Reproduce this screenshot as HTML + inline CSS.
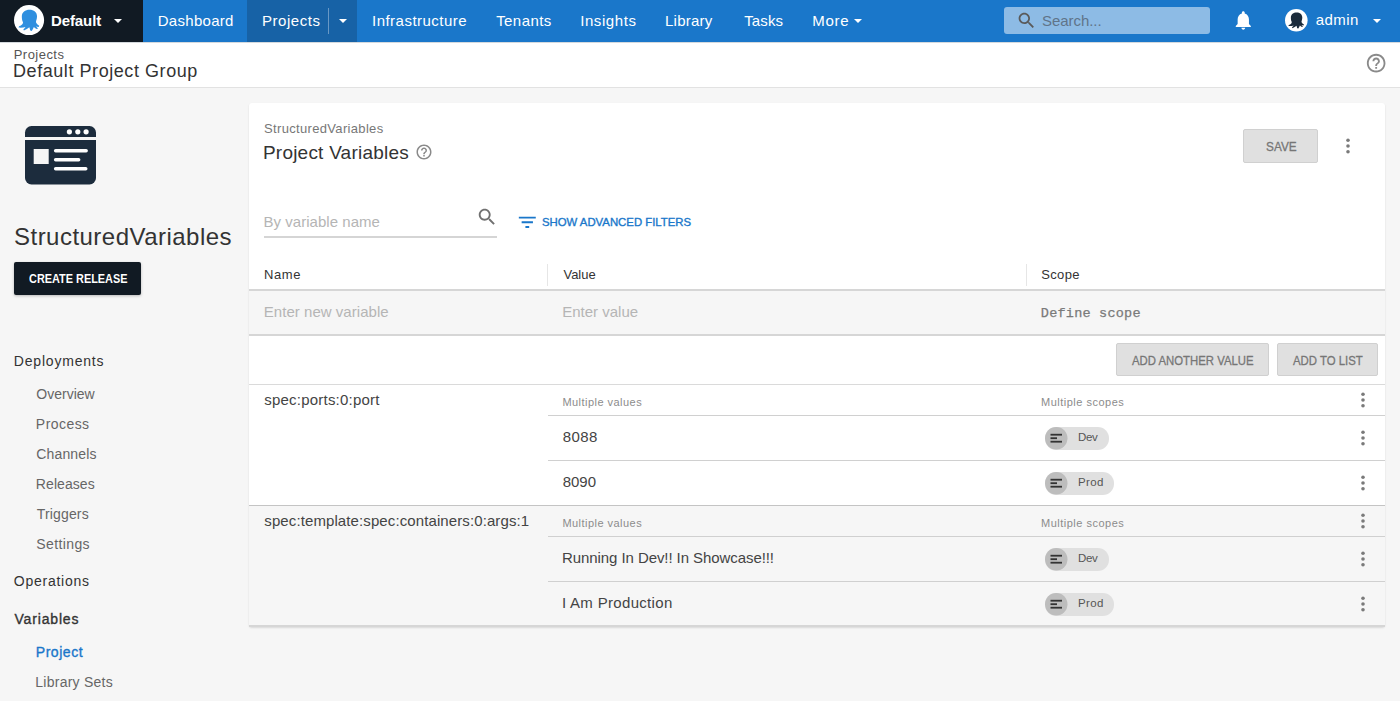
<!DOCTYPE html>
<html><head><meta charset="utf-8"><style>
*{box-sizing:border-box;margin:0;padding:0}
html,body{width:1400px;height:701px;overflow:hidden;background:#f6f6f6;font-family:"Liberation Sans",sans-serif}
.t{position:absolute;white-space:nowrap;line-height:1}
.a{position:absolute}
svg{position:absolute;overflow:visible}
</style></head><body>
<div class="a" style="left:0;top:0;width:1400px;height:42px;background:#1a77ca"></div>
<div class="a" style="left:0;top:0;width:143px;height:42px;background:#111a23"></div>
<div class="a" style="left:0;top:42px;width:1400px;height:1px;background:rgba(60,80,100,0.22);z-index:2"></div>
<div class="a" style="left:247px;top:0;width:110px;height:42px;background:#1762a6"></div>
<div class="a" style="left:328px;top:7.5px;width:1px;height:26px;background:rgba(255,255,255,0.35)"></div>
<svg style="left:13.8px;top:5.25px" width="30.1" height="30.1" viewBox="-100 -100 200 200"><circle cx="0" cy="0" r="100" fill="#fff"/><path fill="#2f8fdf" d="M-48 -25C-48 -52 -25 -69 3 -69C32 -69 53 -52 53 -25C53 -5 46 5 46 15C50 25 58 33 68 38L64 47C56 46 50 44 46 42C50 48 56 52 60 56L50 60C42 56 36 50 32 46C28 54 24 64 18 72L8 70C6 62 4 54 2 48C-8 56 -20 64 -34 70L-38 62C-30 56 -26 50 -24 46C-36 50 -52 52 -70 50L-66 42C-48 36 -40 26 -40 15C-46 5 -48 -10 -48 -25Z"/></svg>
<div class="t" style="left:50.90px;top:13.30px;font-size:15px;color:#fff;font-weight:700;letter-spacing:-0.075px;">Default</div>

<svg style="left:114.3px;top:19px" width="8" height="4.0" viewBox="0 0 10 5"><path d="M0 0l5 5 5-5z" fill="#fff"/></svg>
<div class="t" style="left:157.75px;top:13.30px;font-size:15px;color:#fff;letter-spacing:0.287px;">Dashboard</div>

<div class="t" style="left:261.95px;top:13.30px;font-size:15px;color:#fff;letter-spacing:0.557px;">Projects</div>

<div class="t" style="left:372.00px;top:13.30px;font-size:15px;color:#fff;letter-spacing:0.477px;">Infrastructure</div>

<div class="t" style="left:496.15px;top:13.30px;font-size:15px;color:#fff;letter-spacing:0.442px;">Tenants</div>

<div class="t" style="left:580.20px;top:13.30px;font-size:15px;color:#fff;letter-spacing:0.579px;">Insights</div>

<div class="t" style="left:665.05px;top:13.30px;font-size:15px;color:#fff;letter-spacing:0.225px;">Library</div>

<div class="t" style="left:744.15px;top:13.30px;font-size:15px;color:#fff;letter-spacing:0.137px;">Tasks</div>

<div class="t" style="left:812.15px;top:13.30px;font-size:15px;color:#fff;letter-spacing:0.767px;">More</div>

<svg style="left:339.0px;top:19px" width="8" height="4.0" viewBox="0 0 10 5"><path d="M0 0l5 5 5-5z" fill="#fff"/></svg>
<svg style="left:854.0px;top:19px" width="8" height="4.0" viewBox="0 0 10 5"><path d="M0 0l5 5 5-5z" fill="#fff"/></svg>
<div class="a" style="left:1004px;top:7px;width:206px;height:27px;border-radius:3px;background:rgba(255,255,255,0.5)"></div>
<svg style="left:1015.7px;top:10.2px" width="21" height="21" viewBox="0 0 24 24"><path fill="#5a5a5a" d="M15.5 14h-.79l-.28-.27C15.41 12.59 16 11.11 16 9.5 16 5.91 13.09 3 9.5 3S3 5.91 3 9.5 5.91 16 9.5 16c1.61 0 3.09-.59 4.23-1.57l.27.28v.79l5 4.99L20.49 19l-4.99-5zm-6 0C7.01 14 5 11.99 5 9.5S7.01 5 9.5 5 14 7.01 14 9.5 11.99 14 9.5 14z"/></svg>
<div class="t" style="left:1042.00px;top:13.30px;font-size:15px;color:#607489;letter-spacing:-0.056px;">Search...</div>

<svg style="left:1232.2px;top:8.5px" width="22.6" height="22.6" viewBox="0 0 24 24"><path fill="#fff" d="M12 22c1.1 0 2-.9 2-2h-4c0 1.1.89 2 2 2zm6-6v-5c0-3.07-1.64-5.64-4.5-6.32V4c0-.83-.67-1.5-1.5-1.5s-1.5.67-1.5 1.5v.68C7.63 5.36 6 7.92 6 11v5l-2 2v1h16v-1l-2-2z"/></svg>
<svg style="left:1284.6000000000001px;top:9.099999999999998px" width="22.6" height="22.6" viewBox="-100 -100 200 200"><circle cx="0" cy="0" r="100" fill="#fff"/><path fill="#1b2b3b" d="M-48 -25C-48 -52 -25 -69 3 -69C32 -69 53 -52 53 -25C53 -5 46 5 46 15C50 25 58 33 68 38L64 47C56 46 50 44 46 42C50 48 56 52 60 56L50 60C42 56 36 50 32 46C28 54 24 64 18 72L8 70C6 62 4 54 2 48C-8 56 -20 64 -34 70L-38 62C-30 56 -26 50 -24 46C-36 50 -52 52 -70 50L-66 42C-48 36 -40 26 -40 15C-46 5 -48 -10 -48 -25Z"/></svg>
<div class="t" style="left:1315.65px;top:12.30px;font-size:15px;color:#fff;letter-spacing:0.475px;">admin</div>

<svg style="left:1373.0px;top:19px" width="8" height="4.0" viewBox="0 0 10 5"><path d="M0 0l5 5 5-5z" fill="#fff"/></svg>
<div class="a" style="left:0;top:42px;width:1400px;height:45px;background:#fff"></div>
<div class="a" style="left:0;top:87px;width:1400px;height:1px;background:#e2e2e2"></div>
<div class="t" style="left:13.70px;top:48.00px;font-size:13px;color:#555;letter-spacing:0.471px;">Projects</div>

<div class="t" style="left:13.05px;top:61.76px;font-size:18px;color:#333;letter-spacing:0.558px;">Default Project Group</div>

<svg style="left:1364.54px;top:52.14px" width="22.32" height="22.32" viewBox="0 0 24 24"><path fill="#8a8a8a" d="M11 18h2v-2h-2v2zm1-16C6.48 2 2 6.48 2 12s4.48 10 10 10 10-4.48 10-10S17.52 2 12 2zm0 18c-4.41 0-8-3.59-8-8s3.59-8 8-8 8 3.59 8 8-3.59 8-8 8zm0-14c-2.21 0-4 1.79-4 4h2c0-1.1.9-2 2-2s2 .9 2 2c0 2-3 1.75-3 5h2c0-2.25 3-2.5 3-5 0-2.21-1.79-4-4-4z"/></svg>
<svg style="left:25px;top:126px" width="71" height="59" viewBox="0 0 71 59">
<rect x="0" y="0" width="71" height="58.5" rx="6.5" fill="#1c2c3d"/>
<rect x="0" y="11" width="71" height="3" fill="#f5f5f5"/>
<circle cx="44.4" cy="5.8" r="2.6" fill="#fff"/><circle cx="52.8" cy="5.8" r="2.6" fill="#fff"/><circle cx="61.1" cy="5.8" r="2.6" fill="#fff"/>
<rect x="8.7" y="23" width="15" height="15" fill="#f5f5f5"/>
<rect x="28.9" y="23" width="34" height="3.4" rx="1.7" fill="#fff"/>
<rect x="28.9" y="32" width="26.5" height="3.4" rx="1.7" fill="#fff"/>
<rect x="28.9" y="41" width="33.6" height="3.4" rx="1.7" fill="#fff"/>
</svg>
<div class="t" style="left:14.00px;top:225.18px;font-size:24px;color:#333;letter-spacing:0.475px;">StructuredVariables</div>

<div class="a" style="left:14px;top:262px;width:127px;height:33px;border-radius:2px;background:#111a23;box-shadow:0 1px 3px rgba(0,0,0,0.25)"></div>
<div class="t" style="left:28.80px;top:273.42px;font-size:12.5px;color:#fff;font-weight:700;transform:scaleX(0.8714);transform-origin:0.50px 0;">CREATE RELEASE</div>

<div class="t" style="left:13.85px;top:354.15px;font-size:14px;color:#333;letter-spacing:0.795px;">Deployments</div>

<div class="t" style="left:36.35px;top:387.15px;font-size:14px;color:#666;">Overview</div>

<div class="t" style="left:35.85px;top:417.15px;font-size:14px;color:#666;letter-spacing:0.450px;">Process</div>

<div class="t" style="left:36.30px;top:447.15px;font-size:14px;color:#666;letter-spacing:0.150px;">Channels</div>

<div class="t" style="left:35.85px;top:477.15px;font-size:14px;color:#666;letter-spacing:0.071px;">Releases</div>

<div class="t" style="left:36.70px;top:507.15px;font-size:14px;color:#666;letter-spacing:0.164px;">Triggers</div>

<div class="t" style="left:36.35px;top:537.15px;font-size:14px;color:#666;letter-spacing:0.379px;">Settings</div>

<div class="t" style="left:13.85px;top:574.15px;font-size:14px;color:#333;letter-spacing:0.739px;">Operations</div>

<div class="t" style="left:14.45px;top:612.15px;font-size:14px;color:#333;letter-spacing:0.838px;-webkit-text-stroke:0.35px #333;">Variables</div>

<div class="t" style="left:35.75px;top:645.15px;font-size:14px;color:#1a77ca;letter-spacing:0.542px;-webkit-text-stroke:0.35px #1a77ca;">Project</div>

<div class="t" style="left:35.35px;top:675.15px;font-size:14px;color:#666;letter-spacing:0.241px;">Library Sets</div>

<div class="a" style="left:249px;top:103px;width:1136px;height:524px;background:#fff;border-radius:3px;box-shadow:0 1px 2px rgba(0,0,0,0.12)"></div>
<div class="t" style="left:264.10px;top:122.00px;font-size:13px;color:#777;letter-spacing:0.325px;">StructuredVariables</div>

<div class="t" style="left:262.95px;top:142.92px;font-size:19px;color:#333;letter-spacing:0.222px;">Project Variables</div>

<svg style="left:414.7px;top:142.5px" width="18.0" height="18.0" viewBox="0 0 24 24"><path fill="#8a8a8a" d="M11 18h2v-2h-2v2zm1-16C6.48 2 2 6.48 2 12s4.48 10 10 10 10-4.48 10-10S17.52 2 12 2zm0 18c-4.41 0-8-3.59-8-8s3.59-8 8-8 8 3.59 8 8-3.59 8-8 8zm0-14c-2.21 0-4 1.79-4 4h2c0-1.1.9-2 2-2s2 .9 2 2c0 2-3 1.75-3 5h2c0-2.25 3-2.5 3-5 0-2.21-1.79-4-4-4z"/></svg>
<div class="a" style="left:1243px;top:129px;width:75px;height:34px;border-radius:2px;background:#e0e0e0;border:1px solid #d0d0d0"></div>
<div class="t" style="left:1265.60px;top:140.00px;font-size:13px;color:#767676;transform:scaleX(0.9063);transform-origin:0.60px 0;-webkit-text-stroke:0.3px #767676;">SAVE</div>

<svg style="left:1344.6px;top:136.7px" width="6" height="18" viewBox="0 0 6 18"><circle cx="3" cy="3.3" r="1.8" fill="#7a7a7a"/><circle cx="3" cy="9" r="1.8" fill="#7a7a7a"/><circle cx="3" cy="14.7" r="1.8" fill="#7a7a7a"/></svg>
<div class="t" style="left:263.55px;top:214.30px;font-size:15px;color:#b5b5b5;letter-spacing:0.033px;">By variable name</div>

<div class="a" style="left:264px;top:236px;width:233px;height:1.5px;background:#d5d5d5"></div>
<svg style="left:475.5px;top:206px" width="22" height="22" viewBox="0 0 24 24"><path fill="#707070" d="M15.5 14h-.79l-.28-.27C15.41 12.59 16 11.11 16 9.5 16 5.91 13.09 3 9.5 3S3 5.91 3 9.5 5.91 16 9.5 16c1.61 0 3.09-.59 4.23-1.57l.27.28v.79l5 4.99L20.49 19l-4.99-5zm-6 0C7.01 14 5 11.99 5 9.5S7.01 5 9.5 5 14 7.01 14 9.5 11.99 14 9.5 14z"/></svg>
<svg style="left:516px;top:211px" width="22.6" height="22.6" viewBox="0 0 24 24"><path fill="#1a77ca" d="M10 18h4v-2h-4v2zM3 6v2h18V6H3zm3 7h12v-2H6v2z"/></svg>
<div class="t" style="left:542.15px;top:217.47px;font-size:11.5px;color:#1a77ca;transform:scaleX(0.9870);transform-origin:0.55px 0;-webkit-text-stroke:0.35px #1a77ca;">SHOW ADVANCED FILTERS</div>

<div class="t" style="left:263.95px;top:268.00px;font-size:13px;color:#333;letter-spacing:0.650px;">Name</div>

<div class="t" style="left:563.45px;top:268.00px;font-size:13px;color:#333;">Value</div>

<div class="t" style="left:1041.30px;top:268.00px;font-size:13px;color:#333;letter-spacing:0.325px;">Scope</div>

<div class="a" style="left:547px;top:264px;width:1px;height:22px;background:#e6e6e6"></div>
<div class="a" style="left:1026px;top:264px;width:1px;height:22px;background:#e6e6e6"></div>
<div class="a" style="left:249px;top:289px;width:1136px;height:2px;background:#d6d6d6"></div>
<div class="a" style="left:249px;top:291px;width:1136px;height:43px;background:#f6f6f6"></div>
<div class="a" style="left:249px;top:334px;width:1136px;height:2px;background:#d6d6d6"></div>
<div class="t" style="left:263.75px;top:304.30px;font-size:15px;color:#b5b5b5;letter-spacing:0.038px;">Enter new variable</div>

<div class="t" style="left:562.25px;top:304.30px;font-size:15px;color:#b5b5b5;">Enter value</div>

<div class="t" style="left:1040.85px;top:306.95px;font-size:13.5px;color:#7a7a7a;font-family:'Liberation Mono', monospace;letter-spacing:0.223px;-webkit-text-stroke:0.25px #7a7a7a;">Define scope</div>

<div class="a" style="left:1116px;top:343px;width:153px;height:33px;border-radius:2px;background:#e0e0e0;border:1px solid #d0d0d0"></div>
<div class="a" style="left:1276.5px;top:343px;width:101px;height:33px;border-radius:2px;background:#e0e0e0;border:1px solid #d0d0d0"></div>
<div class="t" style="left:1132.45px;top:354.00px;font-size:13px;color:#767676;transform:scaleX(0.8733);transform-origin:0.05px 0;-webkit-text-stroke:0.3px #767676;">ADD ANOTHER VALUE</div>

<div class="t" style="left:1292.85px;top:354.00px;font-size:13px;color:#767676;transform:scaleX(0.8759);transform-origin:0.05px 0;-webkit-text-stroke:0.3px #767676;">ADD TO LIST</div>

<div class="a" style="left:249px;top:384px;width:1136px;height:2px;background:#dadada"></div>
<div class="a" style="left:249px;top:385px;width:1136px;height:119px;background:#fff"></div><div class="t" style="left:264.30px;top:392.30px;font-size:15px;color:#444;letter-spacing:0.212px;">spec:ports:0:port</div>
<div class="t" style="left:562.40px;top:396.69px;font-size:11px;color:#8c8c8c;letter-spacing:0.468px;">Multiple values</div>
<div class="t" style="left:1041.00px;top:396.69px;font-size:11px;color:#8c8c8c;letter-spacing:0.500px;">Multiple scopes</div>
<svg style="left:1359.5px;top:391px" width="6" height="18" viewBox="0 0 6 18"><circle cx="3" cy="3.3" r="1.8" fill="#7a7a7a"/><circle cx="3" cy="9" r="1.8" fill="#7a7a7a"/><circle cx="3" cy="14.7" r="1.8" fill="#7a7a7a"/></svg><div class="a" style="left:548px;top:415px;width:837px;height:1px;background:#d0d0d0"></div><div class="t" style="left:562.65px;top:429.30px;font-size:15px;color:#444;letter-spacing:0.433px;">8088</div>
<div class="a" style="left:1045px;top:427px;width:64px;height:22.5px;border-radius:11.25px;background:#e0e0e0"></div><svg style="left:1045px;top:427px" width="22.5" height="22.5" viewBox="0 0 22.5 22.5"><circle cx="11.25" cy="11.25" r="11.25" fill="#bdbdbd"/><rect x="5.5" y="6.8" width="11.5" height="1.8" fill="#333"/><rect x="5.5" y="10.3" width="6.5" height="1.8" fill="#333"/><rect x="5.5" y="13.8" width="11.5" height="1.8" fill="#333"/></svg><div class="t" style="left:1078.05px;top:432.27px;font-size:11.5px;color:#555;letter-spacing:-0.325px;">Dev</div>
<svg style="left:1359.5px;top:429px" width="6" height="18" viewBox="0 0 6 18"><circle cx="3" cy="3.3" r="1.8" fill="#7a7a7a"/><circle cx="3" cy="9" r="1.8" fill="#7a7a7a"/><circle cx="3" cy="14.7" r="1.8" fill="#7a7a7a"/></svg><div class="a" style="left:548px;top:460px;width:837px;height:1px;background:#d0d0d0"></div><div class="t" style="left:562.65px;top:474.30px;font-size:15px;color:#444;">8090</div>
<div class="a" style="left:1045px;top:472px;width:69px;height:22.5px;border-radius:11.25px;background:#e0e0e0"></div><svg style="left:1045px;top:472px" width="22.5" height="22.5" viewBox="0 0 22.5 22.5"><circle cx="11.25" cy="11.25" r="11.25" fill="#bdbdbd"/><rect x="5.5" y="6.8" width="11.5" height="1.8" fill="#333"/><rect x="5.5" y="10.3" width="6.5" height="1.8" fill="#333"/><rect x="5.5" y="13.8" width="11.5" height="1.8" fill="#333"/></svg><div class="t" style="left:1078.05px;top:477.27px;font-size:11.5px;color:#555;letter-spacing:0.333px;">Prod</div>
<svg style="left:1359.5px;top:474px" width="6" height="18" viewBox="0 0 6 18"><circle cx="3" cy="3.3" r="1.8" fill="#7a7a7a"/><circle cx="3" cy="9" r="1.8" fill="#7a7a7a"/><circle cx="3" cy="14.7" r="1.8" fill="#7a7a7a"/></svg>
<div class="a" style="left:249px;top:505px;width:1136px;height:1px;background:#c4c4c4"></div>
<div class="a" style="left:249px;top:506px;width:1136px;height:120px;background:#f6f6f6"></div><div class="t" style="left:264.30px;top:513.30px;font-size:15px;color:#444;letter-spacing:0.104px;">spec:template:spec:containers:0:args:1</div>
<div class="t" style="left:562.40px;top:517.69px;font-size:11px;color:#8c8c8c;letter-spacing:0.468px;">Multiple values</div>
<div class="t" style="left:1041.00px;top:517.69px;font-size:11px;color:#8c8c8c;letter-spacing:0.500px;">Multiple scopes</div>
<svg style="left:1359.5px;top:512px" width="6" height="18" viewBox="0 0 6 18"><circle cx="3" cy="3.3" r="1.8" fill="#7a7a7a"/><circle cx="3" cy="9" r="1.8" fill="#7a7a7a"/><circle cx="3" cy="14.7" r="1.8" fill="#7a7a7a"/></svg><div class="a" style="left:548px;top:536px;width:837px;height:1px;background:#d0d0d0"></div><div class="t" style="left:562.05px;top:550.30px;font-size:15px;color:#444;letter-spacing:-0.078px;">Running In Dev!! In Showcase!!!</div>
<div class="a" style="left:1045px;top:548px;width:64px;height:22.5px;border-radius:11.25px;background:#e0e0e0"></div><svg style="left:1045px;top:548px" width="22.5" height="22.5" viewBox="0 0 22.5 22.5"><circle cx="11.25" cy="11.25" r="11.25" fill="#bdbdbd"/><rect x="5.5" y="6.8" width="11.5" height="1.8" fill="#333"/><rect x="5.5" y="10.3" width="6.5" height="1.8" fill="#333"/><rect x="5.5" y="13.8" width="11.5" height="1.8" fill="#333"/></svg><div class="t" style="left:1078.05px;top:553.27px;font-size:11.5px;color:#555;letter-spacing:-0.325px;">Dev</div>
<svg style="left:1359.5px;top:550px" width="6" height="18" viewBox="0 0 6 18"><circle cx="3" cy="3.3" r="1.8" fill="#7a7a7a"/><circle cx="3" cy="9" r="1.8" fill="#7a7a7a"/><circle cx="3" cy="14.7" r="1.8" fill="#7a7a7a"/></svg><div class="a" style="left:548px;top:581px;width:837px;height:1px;background:#d0d0d0"></div><div class="t" style="left:561.90px;top:595.30px;font-size:15px;color:#444;letter-spacing:0.321px;">I Am Production</div>
<div class="a" style="left:1045px;top:593px;width:69px;height:22.5px;border-radius:11.25px;background:#e0e0e0"></div><svg style="left:1045px;top:593px" width="22.5" height="22.5" viewBox="0 0 22.5 22.5"><circle cx="11.25" cy="11.25" r="11.25" fill="#bdbdbd"/><rect x="5.5" y="6.8" width="11.5" height="1.8" fill="#333"/><rect x="5.5" y="10.3" width="6.5" height="1.8" fill="#333"/><rect x="5.5" y="13.8" width="11.5" height="1.8" fill="#333"/></svg><div class="t" style="left:1078.05px;top:598.27px;font-size:11.5px;color:#555;letter-spacing:0.333px;">Prod</div>
<svg style="left:1359.5px;top:595px" width="6" height="18" viewBox="0 0 6 18"><circle cx="3" cy="3.3" r="1.8" fill="#7a7a7a"/><circle cx="3" cy="9" r="1.8" fill="#7a7a7a"/><circle cx="3" cy="14.7" r="1.8" fill="#7a7a7a"/></svg>
<div class="a" style="left:249px;top:625px;width:1136px;height:2px;background:#d6d6d6"></div>
</body></html>
